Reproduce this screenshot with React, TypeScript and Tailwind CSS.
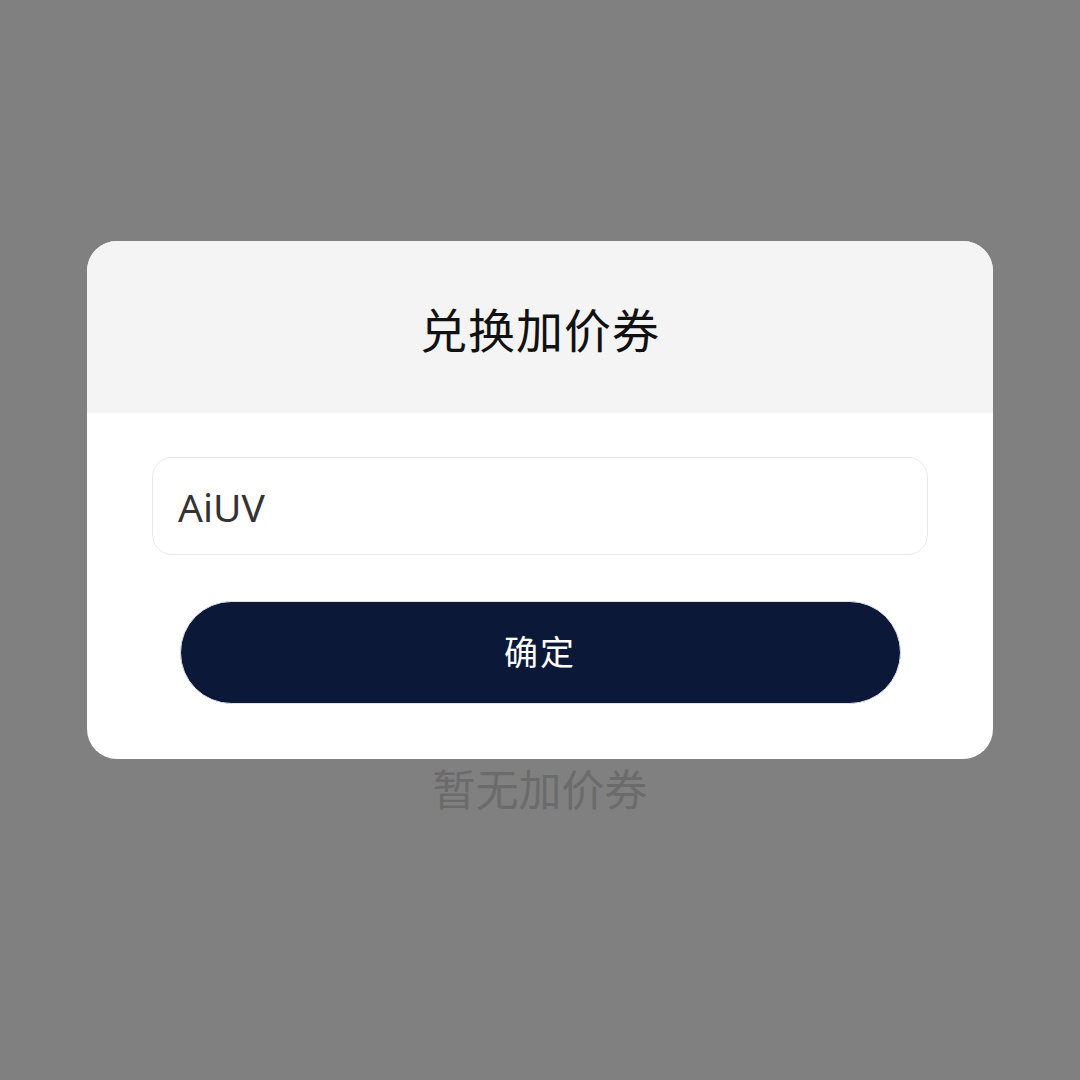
export default function App() {
  return (
    <div className="relative w-[1080px] h-[1080px] bg-[#808080] font-['Noto_Sans','Noto_Sans_CJK_SC',sans-serif]">
      {/* page content behind the overlay */}
      <div className="flex justify-center pt-[762px]">
        <p className="text-[43px] leading-[56px] text-[#6b6b6b]">暂无加价券</p>
      </div>

      {/* modal */}
      <div className="absolute left-[87px] top-[241px] w-[906px] rounded-[30px] overflow-hidden bg-white">
        <div className="h-[172px] bg-[#f4f4f4] flex items-center justify-center">
          <h2 className="text-[47px] leading-none text-[#111] pt-[6px] tracking-[1px]">兑换加价券</h2>
        </div>
        <div className="flex flex-col items-center pt-[44px] pb-[55px]">
          <input
            className="w-[776px] h-[98px] rounded-[20px] border border-[#e8e8e8] bg-white px-[25px] text-[39px] text-[#333] outline-none"
            defaultValue="AiUV"
          />
          <button className="mt-[46px] w-[721px] h-[103px] rounded-full bg-[#0b1838] border border-[#dfe3ee] text-white text-[34px] tracking-[2px]">
            确定
          </button>
        </div>
      </div>
    </div>
  );
}
